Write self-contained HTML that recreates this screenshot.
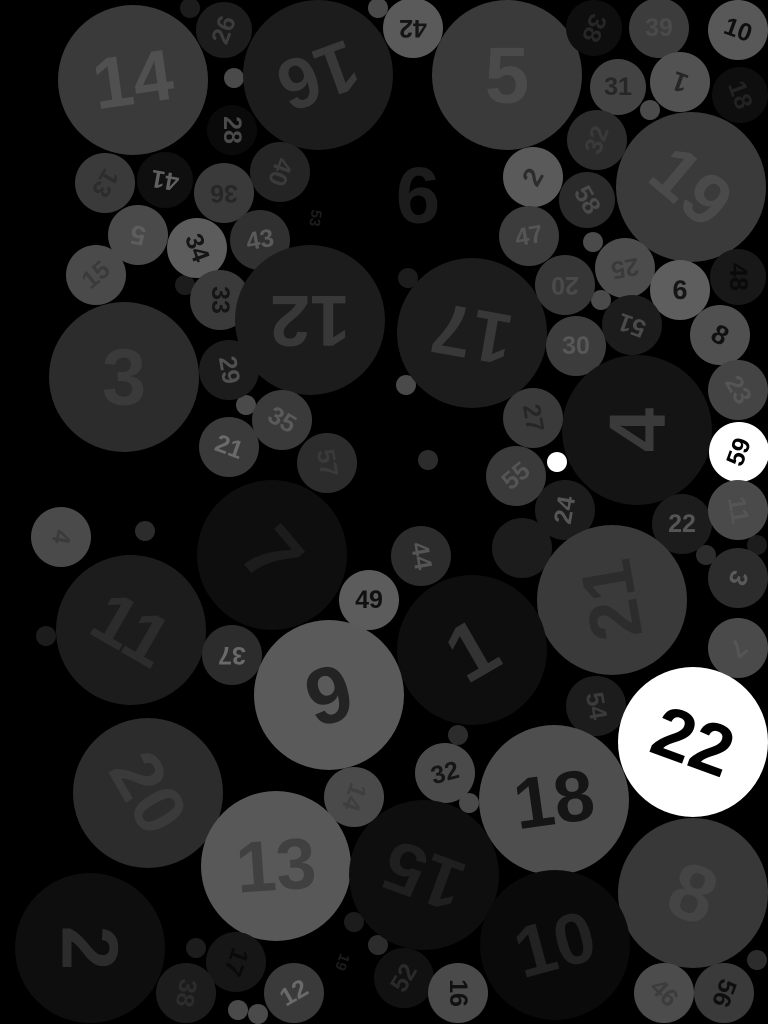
<!DOCTYPE html>
<html><head><meta charset="utf-8"><style>
html,body{margin:0;padding:0;background:#000;width:768px;height:1024px;overflow:hidden}
svg{display:block}
text{font-family:"Liberation Sans",Arial,sans-serif;font-weight:bold;text-anchor:middle;dominant-baseline:central}
.b{font-size:72px}.b1{font-size:80px}.m{font-size:25px}.m1{font-size:27px}.s{font-size:15px}
</style></head><body>
<svg width="768" height="1024" viewBox="0 0 768 1024" xmlns="http://www.w3.org/2000/svg">
<circle cx="190" cy="8" r="10" fill="#1c1c1c"/>
<circle cx="378" cy="8" r="10" fill="#4a4a4a"/>
<circle cx="234" cy="78" r="10" fill="#4a4a4a"/>
<circle cx="650" cy="110" r="10" fill="#4a4a4a"/>
<circle cx="593" cy="242" r="10" fill="#4a4a4a"/>
<circle cx="185" cy="285" r="10" fill="#1c1c1c"/>
<circle cx="408" cy="278" r="10" fill="#1c1c1c"/>
<circle cx="601" cy="300" r="10" fill="#4a4a4a"/>
<circle cx="406" cy="385" r="10" fill="#4a4a4a"/>
<circle cx="246" cy="405" r="10" fill="#4a4a4a"/>
<circle cx="428" cy="460" r="10" fill="#2c2c2c"/>
<circle cx="557" cy="462" r="10" fill="#fff"/>
<circle cx="145" cy="531" r="10" fill="#2c2c2c"/>
<circle cx="522" cy="548" r="30" fill="#1c1c1c"/>
<circle cx="46" cy="636" r="10" fill="#1c1c1c"/>
<circle cx="458" cy="735" r="10" fill="#2c2c2c"/>
<circle cx="469" cy="803" r="10" fill="#4a4a4a"/>
<circle cx="196" cy="948" r="10" fill="#1c1c1c"/>
<circle cx="354" cy="922" r="10" fill="#1c1c1c"/>
<circle cx="378" cy="945" r="10" fill="#2c2c2c"/>
<circle cx="238" cy="1010" r="10" fill="#4a4a4a"/>
<circle cx="258" cy="1014" r="10" fill="#4a4a4a"/>
<circle cx="757" cy="960" r="10" fill="#2c2c2c"/>
<circle cx="706" cy="555" r="10" fill="#2c2c2c"/>
<circle cx="757" cy="545" r="10" fill="#1c1c1c"/>

<circle cx="133" cy="80" r="75" fill="#3a3a3a"/><text x="133" y="80" class="b" fill="#505050" transform="rotate(-8 133 80)">14</text>
<circle cx="224" cy="30" r="28" fill="#1c1c1c"/><text x="224" y="30" class="m" fill="#3c3c3c" transform="rotate(290 224 30)">26</text>
<circle cx="318" cy="75" r="75" fill="#1c1c1c"/><text x="318" y="75" class="b" fill="#383838" transform="rotate(160 318 75)">16</text>
<circle cx="413" cy="28" r="30" fill="#5a5a5a"/><text x="413" y="28" class="m" fill="#151515" transform="rotate(180 413 28)">42</text>
<circle cx="507" cy="75" r="75" fill="#3a3a3a"/><text x="507" y="75" class="b1" fill="#4a4a4a">5</text>
<circle cx="594" cy="28" r="28" fill="#0e0e0e"/><text x="594" y="28" class="m" fill="#262626" transform="rotate(110 594 28)">38</text>
<circle cx="659" cy="28" r="30" fill="#3c3c3c"/><text x="659" y="28" class="m" fill="#4a4a4a">39</text>
<circle cx="738" cy="30" r="30" fill="#585858"/><text x="738" y="30" class="m" fill="#0e0e0e" transform="rotate(20 738 30)">10</text>
<circle cx="618" cy="87" r="28" fill="#434343"/><text x="618" y="87" class="m" fill="#262626">31</text>
<circle cx="680" cy="82" r="30" fill="#525252"/><text x="680" y="82" class="m1" fill="#262626" transform="rotate(200 680 82)">1</text>
<circle cx="740" cy="95" r="28" fill="#0e0e0e"/><text x="740" y="95" class="m" fill="#222" transform="rotate(70 740 95)">18</text>
<circle cx="232" cy="130" r="25" fill="#0a0a0a"/><text x="232" y="130" class="m" fill="#4a4a4a" transform="rotate(90 232 130)">28</text>
<circle cx="597" cy="140" r="30" fill="#2c2c2c"/><text x="597" y="140" class="m" fill="#3a3a3a" transform="rotate(290 597 140)">32</text>
<circle cx="691" cy="187" r="75" fill="#3a3a3a"/><text x="691" y="187" class="b" fill="#4a4a4a" transform="rotate(40 691 187)">19</text>
<circle cx="105" cy="183" r="30" fill="#3a3a3a"/><text x="105" y="183" class="m" fill="#2c2c2c" transform="rotate(120 105 183)">13</text>
<circle cx="165" cy="180" r="28" fill="#0f0f0f"/><text x="165" y="180" class="m" fill="#606060" transform="rotate(190 165 180)">41</text>
<circle cx="224" cy="193" r="30" fill="#3a3a3a"/><text x="224" y="193" class="m" fill="#262626" transform="rotate(180 224 193)">36</text>
<circle cx="280" cy="172" r="30" fill="#242424"/><text x="280" y="172" class="m" fill="#3a3a3a" transform="rotate(110 280 172)">40</text>
<text x="418" y="195" class="b1" fill="#1c1c1c">6</text>
<circle cx="533" cy="177" r="30" fill="#5a5a5a"/><text x="533" y="177" class="m1" fill="#2c2c2c" transform="rotate(300 533 177)">2</text>
<circle cx="587" cy="200" r="28" fill="#2a2a2a"/><text x="587" y="200" class="m" fill="#4a4a4a" transform="rotate(60 587 200)">58</text>
<text x="315" y="218" class="s" fill="#1c1c1c" transform="rotate(100 315 218)">53</text>
<circle cx="138" cy="235" r="30" fill="#4a4a4a"/><text x="138" y="235" class="m1" fill="#5e5e5e" transform="rotate(190 138 235)">5</text>
<circle cx="197" cy="248" r="30" fill="#5c5c5c"/><text x="197" y="248" class="m" fill="#151515" transform="rotate(70 197 248)">34</text>
<circle cx="260" cy="240" r="30" fill="#303030"/><text x="260" y="240" class="m" fill="#5a5a5a" transform="rotate(-10 260 240)">43</text>
<circle cx="529" cy="236" r="30" fill="#3c3c3c"/><text x="529" y="236" class="m" fill="#555" transform="rotate(-10 529 236)">47</text>
<circle cx="625" cy="268" r="30" fill="#4c4c4c"/><text x="625" y="268" class="m" fill="#3a3a3a" transform="rotate(170 625 268)">25</text>
<circle cx="738" cy="277" r="28" fill="#181818"/><text x="738" y="277" class="m" fill="#0a0a0a" transform="rotate(90 738 277)">48</text>
<circle cx="96" cy="275" r="30" fill="#4a4a4a"/><text x="96" y="275" class="m" fill="#3a3a3a" transform="rotate(-40 96 275)">15</text>
<circle cx="220" cy="300" r="30" fill="#3a3a3a"/><text x="220" y="300" class="m" fill="#151515" transform="rotate(90 220 300)">33</text>
<circle cx="310" cy="320" r="75" fill="#1c1c1c"/><text x="310" y="320" class="b" fill="#383838" transform="rotate(180 310 320)">12</text>
<circle cx="472" cy="333" r="75" fill="#1c1c1c"/><text x="472" y="333" class="b" fill="#383838" transform="rotate(190 472 333)">17</text>
<circle cx="565" cy="285" r="30" fill="#363636"/><text x="565" y="285" class="m" fill="#4a4a4a" transform="rotate(180 565 285)">20</text>
<circle cx="680" cy="290" r="30" fill="#5e5e5e"/><text x="680" y="290" class="m1" fill="#151515">6</text>
<circle cx="632" cy="325" r="30" fill="#1c1c1c"/><text x="632" y="325" class="m" fill="#4a4a4a" transform="rotate(200 632 325)">51</text>
<circle cx="720" cy="335" r="30" fill="#505050"/><text x="720" y="335" class="m1" fill="#101010" transform="rotate(30 720 335)">8</text>
<circle cx="124" cy="377" r="75" fill="#2c2c2c"/><text x="124" y="377" class="b1" fill="#3a3a3a">3</text>
<circle cx="229" cy="370" r="30" fill="#1c1c1c"/><text x="229" y="370" class="m" fill="#505050" transform="rotate(80 229 370)">29</text>
<circle cx="576" cy="346" r="30" fill="#3c3c3c"/><text x="576" y="346" class="m" fill="#585858">30</text>
<circle cx="637" cy="430" r="75" fill="#141414"/><text x="637" y="430" class="b1" fill="#3a3a3a" transform="rotate(270 637 430)">4</text>
<circle cx="738" cy="390" r="30" fill="#444"/><text x="738" y="390" class="m" fill="#555" transform="rotate(60 738 390)">23</text>
<circle cx="282" cy="420" r="30" fill="#3a3a3a"/><text x="282" y="420" class="m" fill="#5a5a5a" transform="rotate(30 282 420)">35</text>
<circle cx="533" cy="418" r="30" fill="#3a3a3a"/><text x="533" y="418" class="m" fill="#262626" transform="rotate(80 533 418)">27</text>
<circle cx="229" cy="447" r="30" fill="#3a3a3a"/><text x="229" y="447" class="m" fill="#6a6a6a" transform="rotate(20 229 447)">21</text>
<circle cx="327" cy="463" r="30" fill="#2c2c2c"/><text x="327" y="463" class="m" fill="#3a3a3a" transform="rotate(80 327 463)">57</text>
<circle cx="739" cy="452" r="30" fill="#fff"/><text x="739" y="452" class="m" fill="#000" transform="rotate(290 739 452)">59</text>
<circle cx="516" cy="476" r="30" fill="#3a3a3a"/><text x="516" y="476" class="m" fill="#555" transform="rotate(320 516 476)">55</text>
<circle cx="565" cy="510" r="30" fill="#1c1c1c"/><text x="565" y="510" class="m" fill="#555" transform="rotate(280 565 510)">24</text>
<circle cx="682" cy="524" r="30" fill="#1c1c1c"/><text x="682" y="524" class="m" fill="#555">22</text>
<circle cx="738" cy="510" r="30" fill="#4a4a4a"/><text x="738" y="510" class="m" fill="#555" transform="rotate(80 738 510)">11</text>
<circle cx="61" cy="537" r="30" fill="#4a4a4a"/><text x="61" y="537" class="m" fill="#3a3a3a" transform="rotate(100 61 537)">4</text>
<circle cx="272" cy="555" r="75" fill="#0e0e0e"/><text x="272" y="555" class="b1" fill="#1c1c1c" transform="rotate(50 272 555)">7</text>
<circle cx="421" cy="556" r="30" fill="#2c2c2c"/><text x="421" y="556" class="m" fill="#555" transform="rotate(80 421 556)">44</text>
<circle cx="612" cy="600" r="75" fill="#3a3a3a"/><text x="612" y="600" class="b" fill="#2c2c2c" transform="rotate(260 612 600)">21</text>
<circle cx="738" cy="578" r="30" fill="#2c2c2c"/><text x="738" y="578" class="m" fill="#5a5a5a" transform="rotate(110 738 578)">3</text>
<circle cx="131" cy="630" r="75" fill="#1c1c1c"/><text x="131" y="630" class="b" fill="#2c2c2c" transform="rotate(30 131 630)">11</text>
<circle cx="369" cy="600" r="30" fill="#5c5c5c"/><text x="369" y="600" class="m" fill="#101010">49</text>
<circle cx="472" cy="650" r="75" fill="#0e0e0e"/><text x="472" y="650" class="b1" fill="#333" transform="rotate(330 472 650)">1</text>
<circle cx="232" cy="655" r="30" fill="#2c2c2c"/><text x="232" y="655" class="m" fill="#6a6a6a" transform="rotate(180 232 655)">37</text>
<circle cx="738" cy="648" r="30" fill="#4a4a4a"/><text x="738" y="648" class="m" fill="#555" transform="rotate(140 738 648)">7</text>
<circle cx="329" cy="695" r="75" fill="#5a5a5a"/><text x="329" y="695" class="b1" fill="#232323" transform="rotate(-15 329 695)">9</text>
<circle cx="596" cy="706" r="30" fill="#1c1c1c"/><text x="596" y="706" class="m" fill="#3a3a3a" transform="rotate(80 596 706)">54</text>
<circle cx="693" cy="742" r="75" fill="#fff"/><text x="693" y="742" class="b" fill="#000" transform="rotate(20 693 742)">22</text>
<circle cx="148" cy="793" r="75" fill="#2c2c2c"/><text x="148" y="793" class="b" fill="#3a3a3a" transform="rotate(60 148 793)">20</text>
<circle cx="445" cy="773" r="30" fill="#4a4a4a"/><text x="445" y="773" class="m" fill="#151515" transform="rotate(-15 445 773)">32</text>
<circle cx="554" cy="800" r="75" fill="#4e4e4e"/><text x="554" y="800" class="b" fill="#151515" transform="rotate(-8 554 800)">18</text>
<circle cx="354" cy="797" r="30" fill="#4a4a4a"/><text x="354" y="797" class="m" fill="#3e3e3e" transform="rotate(110 354 797)">14</text>
<circle cx="276" cy="866" r="75" fill="#585858"/><text x="276" y="866" class="b" fill="#404040" transform="rotate(-4 276 866)">13</text>
<circle cx="424" cy="875" r="75" fill="#0e0e0e"/><text x="424" y="875" class="b" fill="#1f1f1f" transform="rotate(200 424 875)">15</text>
<circle cx="693" cy="893" r="75" fill="#383838"/><text x="693" y="893" class="b1" fill="#444" transform="rotate(20 693 893)">8</text>
<circle cx="90" cy="948" r="75" fill="#0e0e0e"/><text x="90" y="948" class="b1" fill="#2c2c2c" transform="rotate(90 90 948)">2</text>
<circle cx="555" cy="945" r="75" fill="#0a0a0a"/><text x="555" y="945" class="b" fill="#222" transform="rotate(-15 555 945)">10</text>
<circle cx="236" cy="962" r="30" fill="#161616"/><text x="236" y="962" class="m" fill="#0a0a0a" transform="rotate(110 236 962)">17</text>
<circle cx="186" cy="993" r="30" fill="#1c1c1c"/><text x="186" y="993" class="m" fill="#2c2c2c" transform="rotate(100 186 993)">38</text>
<text x="342" y="962" class="s" fill="#1c1c1c" transform="rotate(110 342 962)">19</text>
<circle cx="404" cy="978" r="30" fill="#111"/><text x="404" y="978" class="m" fill="#2a2a2a" transform="rotate(300 404 978)">52</text>
<circle cx="294" cy="993" r="30" fill="#3a3a3a"/><text x="294" y="993" class="m" fill="#6a6a6a" transform="rotate(-30 294 993)">12</text>
<circle cx="458" cy="993" r="30" fill="#4a4a4a"/><text x="458" y="993" class="m" fill="#111" transform="rotate(90 458 993)">16</text>
<circle cx="664" cy="993" r="30" fill="#4c4c4c"/><text x="664" y="993" class="m" fill="#3c3c3c" transform="rotate(45 664 993)">46</text>
<circle cx="724" cy="993" r="30" fill="#3a3a3a"/><text x="724" y="993" class="m" fill="#0e0e0e" transform="rotate(110 724 993)">56</text>
</svg>
</body></html>
